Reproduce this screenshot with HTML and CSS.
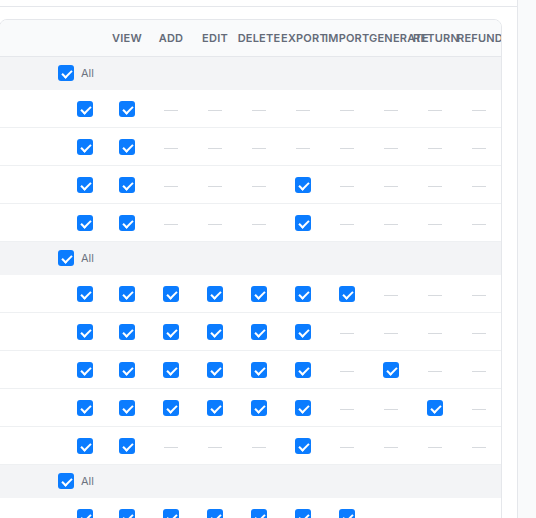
FILE: index.html
```html
<!DOCTYPE html>
<html lang="en">
<head>
  <meta charset="UTF-8">
  <title>Role Permissions</title>
  <link rel="stylesheet" href="styles.css">
</head>
<body>

<div class="app">
  <main class="main">
    <div class="toolbar"></div>

    <div class="card">
      <table class="perm-table">
        <colgroup>
          <col class="col-name">
          <col class="col-all">
          <col span="9" class="col-perm">
        </colgroup>
        <thead>
          <tr>
            <th></th>
            <th></th>
            <th>View</th>
            <th>Add</th>
            <th>Edit</th>
            <th>Delete</th>
            <th>Export</th>
            <th>Import</th>
            <th>Generate</th>
            <th>Return</th>
            <th>Refund</th>
          </tr>
        </thead>
        <tbody id="permBody"></tbody>
      </table>
    </div>
  </main>

  <aside class="side"></aside>
</div>

<script>
  // 1 = granted, 0 = not available for this module
  // order: all, view, add, edit, delete, export, import, generate, return, refund
  const groups = [
    [
      [1, 1, 0, 0, 0, 0, 0, 0, 0, 0],
      [1, 1, 0, 0, 0, 0, 0, 0, 0, 0],
      [1, 1, 0, 0, 0, 1, 0, 0, 0, 0],
      [1, 1, 0, 0, 0, 1, 0, 0, 0, 0]
    ],
    [
      [1, 1, 1, 1, 1, 1, 1, 0, 0, 0],
      [1, 1, 1, 1, 1, 1, 0, 0, 0, 0],
      [1, 1, 1, 1, 1, 1, 0, 1, 0, 0],
      [1, 1, 1, 1, 1, 1, 0, 0, 1, 0],
      [1, 1, 0, 0, 0, 1, 0, 0, 0, 0]
    ],
    [
      [1, 1, 1, 1, 1, 1, 1, 0, 0, 0]
    ]
  ];

  function renderTable() {
    const body = document.getElementById("permBody");
    let html = "";

    groups.forEach(function (rows) {
      html += '<tr class="group"><td colspan="11">' +
              '<span class="group-all"><span class="cb"></span>All</span></td></tr>';

      rows.forEach(function (row) {
        html += "<tr><td></td>";
        row.forEach(function (on, i) {
          const cls = i === 0 ? ' class="cell-all"' : "";
          html += "<td" + cls + ">" + (on ? '<span class="cb"></span>' : '<span class="dash"></span>') + "</td>";
        });
        html += "</tr>";
      });
    });

    body.innerHTML = html;
  }

  renderTable();
</script>

</body>
</html>
```

FILE: styles.css
```css
* {
  box-sizing: border-box;
}

body {
  margin: 0;
  font-family: Inter, "Noto Sans", sans-serif;
  background: #ffffff;
  overflow: hidden;
}

.app {
  display: flex;
  height: 100vh;
}

.main {
  flex: 1;
  min-width: 0;
  overflow: hidden;
}

.side {
  width: 19px;
  border-left: 1px solid #e5e7eb;
  background: #f9fafb;
}

.toolbar {
  height: 7px;
  border-bottom: 1px solid #e5e7eb;
}

.card {
  margin: 12px 15px 0 -1px;
  border: 1px solid #e5e7eb;
  border-radius: 8px;
  overflow: hidden;
}

.perm-table {
  width: 501px;
  table-layout: fixed;
  border-collapse: separate;
  border-spacing: 0;
}

.col-name {
  width: 63px;
}

.col-all {
  width: 42px;
}

.col-perm {
  width: 44px;
}

.perm-table th {
  height: 37px;
  padding: 0;
  background: #f9fafb;
  border-bottom: 1px solid #e5e7eb;
  color: #646b78;
  font-size: 11px;
  font-weight: 600;
  letter-spacing: 0.02em;
  text-transform: uppercase;
  text-align: center;
  white-space: nowrap;
}

.perm-table td {
  height: 38px;
  padding: 0;
  border-bottom: 1px solid #eef0f2;
  text-align: center;
  vertical-align: middle;
  line-height: 1;
}

.perm-table td.cell-all {
  padding-left: 2px;
}

.perm-table tr.group td {
  height: 33px;
  padding: 2px 0 0 58px;
  background: #f3f4f6;
  border-bottom-color: #f3f4f6;
  text-align: left;
}

.group-all {
  display: inline-flex;
  align-items: center;
  gap: 7px;
  color: #6b7280;
  font-size: 11px;
}

.cb {
  display: inline-block;
  position: relative;
  width: 16px;
  height: 16px;
  border-radius: 3px;
  background: #0b7cff;
  vertical-align: middle;
}

.cb::after {
  content: "";
  position: absolute;
  left: 5.5px;
  top: 2.5px;
  width: 4px;
  height: 8px;
  border: solid #ffffff;
  border-width: 0 2px 2px 0;
  transform: rotate(45deg);
}

.dash {
  display: inline-block;
  width: 14px;
  height: 1px;
  background: #d7dade;
  vertical-align: middle;
}
```
